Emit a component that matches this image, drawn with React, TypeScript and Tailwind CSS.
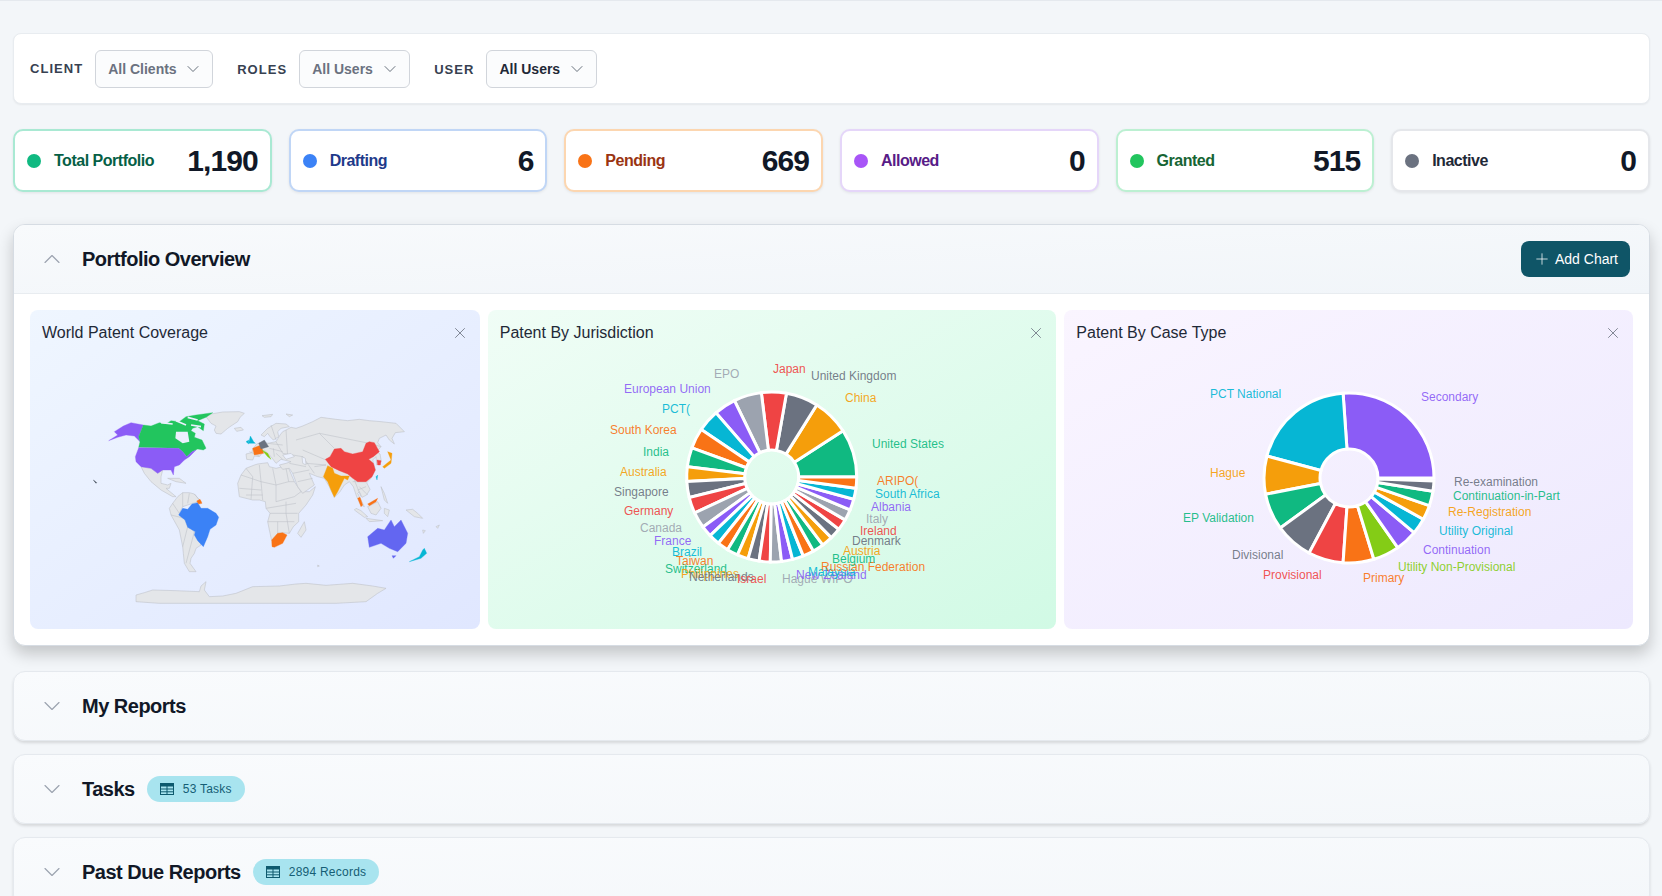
import { ChevronDown, ChevronUp, Plus, X } from "lucide-react";

const FONT = "font-['Liberation_Sans',Arial,sans-serif]";

const PALETTE = ["#10b981", "#f59e0b", "#6b7280", "#ef4444", "#9ca3af", "#8b5cf6", "#06b6d4", "#f97316"];

const STATS = [
  { label: "Total Portfolio", value: "1,190", border: "border-[#a9e9d3]", text: "text-[#065f46]", dot: "bg-[#10b981]" },
  { label: "Drafting", value: "6", border: "border-[#c0d6f6]", text: "text-[#1e3a8a]", dot: "bg-[#3b82f6]" },
  { label: "Pending", value: "669", border: "border-[#fcd6b0]", text: "text-[#9a3412]", dot: "bg-[#f97316]" },
  { label: "Allowed", value: "0", border: "border-[#e5d6f9]", text: "text-[#581c87]", dot: "bg-[#a855f7]" },
  { label: "Granted", value: "515", border: "border-[#bcf0d2]", text: "text-[#166534]", dot: "bg-[#22c55e]" },
  { label: "Inactive", value: "0", border: "border-[#e5e7eb]", text: "text-[#1f2937]", dot: "bg-[#6b7280]" },
];

// [label, x, baseline] in px inside the chart svg; order = counter-clockwise from 3 o'clock
const JURISDICTION: [string, number, number][] = [
  ["United States", 293, 99], ["China", 266, 53], ["United Kingdom", 232, 31], ["Japan", 194, 24],
  ["EPO", 135, 29], ["European Union", 45, 44], ["PCT(", 83, 64], ["South Korea", 31, 85],
  ["India", 64, 107], ["Australia", 41, 127], ["Singapore", 35, 147], ["Germany", 45, 166],
  ["Canada", 61, 183], ["France", 75, 196], ["Brazil", 93, 207], ["Taiwan", 97, 216],
  ["Switzerland", 86, 224], ["Philippines", 102, 229], ["Netherlands", 110, 232], ["Israel", 158, 234],
  ["Hague WIPO", 203, 234], ["New Zealand", 217, 230], ["Malaysia", 229, 227], ["Russian Federation", 242, 222],
  ["Belgium", 253, 214], ["Austria", 264, 206], ["Denmark", 273, 196], ["Ireland", 281, 186],
  ["Italy", 287, 174], ["Albania", 292, 162], ["South Africa", 296, 149], ["ARIPO(", 298, 136],
];

const JUR_ANGLES = [33, 58, 80, 97, 116, 131, 146, 160, 173, 183, 194, 205, 216];
for (let i = 1; i <= 19; i++) JUR_ANGLES.push(216 + (144 / 19) * i);

const CASE_TYPES: [string, string, number, number, number][] = [
  ["Secondary", "#8b5cf6", 94, 271, 32],
  ["PCT National", "#06b6d4", 165, 60, 29],
  ["Hague", "#f59e0b", 191, 60, 108],
  ["EP Validation", "#10b981", 216, 33, 153],
  ["Divisional", "#6b7280", 242, 82, 190],
  ["Provisional", "#ef4444", 266, 113, 210],
  ["Primary", "#f97316", 287, 213, 213],
  ["Utility Non-Provisional", "#84cc16", 305, 248, 202],
  ["Continuation", "#8b5cf6", 320, 273, 185],
  ["Utility Original", "#06b6d4", 331, 289, 166],
  ["Re-Registration", "#f59e0b", 341, 298, 147],
  ["Continuation-in-Part", "#10b981", 351, 303, 131],
  ["Re-examination", "#6b7280", 358, 304, 117],
];

function slicePath(cx: number, cy: number, r0: number, r1: number, a0: number, a1: number) {
  const p = (r: number, a: number) => {
    const t = (a * Math.PI) / 180;
    return `${(cx + r * Math.cos(t)).toFixed(2)} ${(cy - r * Math.sin(t)).toFixed(2)}`;
  };
  const large = a1 - a0 > 180 ? 1 : 0;
  return `M${p(r1, a0)}A${r1} ${r1} 0 ${large} 0 ${p(r1, a1)}L${p(r0, a1)}A${r0} ${r0} 0 ${large} 1 ${p(r0, a0)}Z`;
}

function JurisdictionChart() {
  return (
    <svg viewBox="-7 0 400 250" className="mx-auto mt-1 h-[250px] w-[400px] overflow-visible">
      {JUR_ANGLES.map((a, i) => (
        <path key={i} d={slicePath(192.7, 128, 27, 85, i === 0 ? 0 : JUR_ANGLES[i - 1], a)} fill={PALETTE[i % 8]} stroke="#fff" strokeWidth="3" />
      ))}
      {JURISDICTION.map(([t, x, y], i) => (
        <text key={t} x={x} y={y} fontSize="12" fill={PALETTE[i % 8]} fillOpacity="0.92">{t}</text>
      ))}
    </svg>
  );
}

function CaseTypeChart() {
  return (
    <svg viewBox="-16 0 430 230" className="mx-auto mt-6 h-[230px] w-[430px] overflow-visible">
      {CASE_TYPES.map(([t, c, a], i) => (
        <path key={t} d={slicePath(199, 109, 29, 85, i === 0 ? 0 : CASE_TYPES[i - 1][2], a)} fill={c} stroke="#fff" strokeWidth="3" />
      ))}
      {CASE_TYPES.map(([t, c, , x, y]) => (
        <text key={t} x={x} y={y} fontSize="12" fill={c} fillOpacity="0.92">{t}</text>
      ))}
    </svg>
  );
}

const LAND = "#e4e6e9";
const EDGE = "#bfc3c9";
const HOLE = "#ebf0fd";

const GRAY_SHAPES = [
  // greenland, iceland, svalbard
  "575,342 610,336 660,335 675,340 662,352 655,365 635,378 625,385 605,402 590,400 585,390 590,378 575,370 560,350",
  "645,385 665,382 672,390 652,394",
  "728,347 760,343 755,350 735,352",
  "800,342 820,345 810,350",
  // central america and cuba
  "365,500 395,505 415,520 430,510 425,530 425,550 445,555 455,550 450,565 440,565 470,590 460,590 425,570 395,545 375,520",
  "445,535 480,535 500,550 470,545",
  // south america
  "460,610 475,590 490,578 510,578 525,582 545,605 520,610 490,620 480,640 495,655 505,680 525,695 540,720 545,735 530,745 525,760 515,775 512,790 530,815 510,815 495,790 492,760 490,740 480,690 455,645 450,625",
  // africa and madagascar
  "655,550 665,525 680,505 705,495 715,492 745,488 750,500 770,505 790,500 808,505 825,545 845,575 870,575 888,560 880,585 860,615 838,640 838,665 822,680 810,700 790,698 775,700 757,722 750,690 745,665 752,640 740,625 738,605 720,600 700,600 680,595 660,590",
  "855,665 860,690 845,712 835,700",
  // eurasia
  "682,478 680,462 697,458 700,447 712,432 730,425 745,430 770,425 782,405 790,395 800,390 815,382 830,385 850,378 880,365 905,352 950,358 985,362 1020,358 1050,362 1085,365 1130,370 1155,395 1128,398 1118,415 1125,432 1110,420 1100,405 1080,415 1075,428 1085,440 1072,455 1082,462 1086,485 1072,495 1070,470 1060,480 1068,510 1055,535 1042,548 1052,568 1042,585 1028,592 1020,575 1015,580 1025,600 1035,620 1025,615 1012,590 1002,560 990,545 975,555 962,575 945,592 930,560 915,535 895,530 870,520 885,555 850,580 835,560 820,520 810,505 790,508 780,495 800,490 815,485 785,478 770,490 755,470 735,450 720,470 705,468 700,480",
  // scandinavia
  "725,405 745,385 770,370 800,372 810,380 785,385 775,395 778,410 762,420 752,410 745,400 735,410",
  // indonesia, philippines, new guinea
  "1010,625 1025,632 1045,650 1035,652 1005,630",
  "1045,620 1075,605 1085,625 1070,645 1055,640",
  "1040,655 1090,662 1050,665",
  "1095,625 1110,630 1105,650 1095,640",
  "1085,560 1095,580 1105,610 1095,600",
  "1160,630 1180,628 1195,640 1210,655 1185,650",
  "1210,690 1218,692 1212,700",
  "1250,680 1260,675 1255,685",
  "895,795 900,798 895,800",
  // antarctica
  "350,885 375,878 400,870 470,872 540,875 545,858 560,845 555,870 570,890 610,888 650,880 680,868 700,860 780,858 830,852 860,850 920,856 1000,850 1060,858 1100,865 1075,880 1040,905 950,910 420,910 350,905",
];

const COLORED_SHAPES: [string, string][] = [
  ["#8b5cf6", "268,422 295,405 285,395 312,378 335,368 372,375 358,410 362,425 345,408 320,405 295,412"],
  ["#22c55e", "372,375 395,378 420,368 440,372 455,362 480,365 500,350 530,345 580,338 560,352 535,362 555,372 552,392 535,380 520,385 515,392 528,400 525,412 548,420 560,445 552,450 535,447 518,455 502,470 490,455 478,445 358,442 362,425 358,410"],
  ["#8b5cf6", "358,443 478,445 490,455 502,470 518,455 530,450 510,470 495,480 480,495 465,500 462,525 455,510 430,510 415,520 395,505 365,500 350,485 348,470"],
  ["#3b82f6", "478,645 490,625 505,628 518,612 535,608 545,625 565,625 590,640 598,652 590,675 572,688 565,710 552,740 535,722 525,705 528,695 505,682 497,660"],
  ["#f97316", "532,603 542,598 548,610 538,612"],
  ["#f97316", "757,720 775,700 790,698 803,705 790,730 765,742 758,740"],
  ["#ef4444", "918,478 932,470 945,447 965,445 975,455 1000,462 1030,455 1040,430 1050,425 1065,428 1080,455 1062,470 1048,478 1062,490 1068,510 1058,530 1040,545 1015,545 1000,535 985,522 960,512 935,500"],
  ["#f59e0b", "912,530 925,497 940,505 945,520 965,528 990,528 985,540 975,535 965,555 955,575 945,592 935,570 925,545"],
  ["#f59e0b", "1090,500 1115,480 1105,455 1118,460 1115,490 1095,505"],
  ["#ef4444", "1073,480 1085,482 1083,495 1075,495"],
  ["#06b6d4", "1070,530 1075,525 1073,540"],
  ["#f97316", "1015,595 1022,592 1030,615 1025,620"],
  ["#f97316", "1045,612 1075,595 1070,605 1050,617"],
  ["#6366f1", "1045,710 1075,685 1095,690 1115,660 1125,680 1145,660 1165,700 1160,730 1135,755 1110,745 1085,730 1050,742"],
  ["#6366f1", "1118,767 1130,767 1122,775"],
  ["#06b6d4", "1170,785 1200,770 1210,750 1215,745 1222,760 1205,775"],
  ["#06b6d4", "688,430 693,408 703,425 708,430"],
  ["#06b6d4", "680,425 688,420 688,432"],
  ["#f97316", "700,445 725,435 733,460 705,465"],
  ["#6b7280", "718,430 735,420 748,440 725,447"],
  ["#84cc16", "728,450 745,460 755,478 745,470"],
  ["#1f2937", "222,540 232,548 230,550"],
];

const BORDERS = [
  // africa
  "M665 525L725 545L730 600M680 505L700 530L695 598M720 495L725 545L770 555L760 505M770 555L770 605M808 545L770 555M800 505L808 545L825 545M770 605L825 590L845 575M740 625L830 610M752 640L835 640M745 665L775 665L775 700M775 665L825 665M800 605L800 640M660 565L725 570M680 585L730 585M800 640L810 700",
  // europe and asia
  "M800 390L805 470M770 425L790 460L850 470M850 450L920 480M860 490L920 495M810 490L860 500M830 420L900 400L945 445M900 400L1040 428M850 470L885 520M885 500L920 495M820 520L870 510M835 545L880 535",
  "M755 375L770 420M745 430L790 435M750 445L790 455M770 460L790 478M690 455L720 468M762 445L765 470",
  "M1005 540L1025 590M1020 560L1045 585M1000 545L1040 545M1015 570L1040 560M1040 428L1085 440",
  // south america
  "M480 640L460 610M495 655L455 645M505 680L490 740M525 695L500 790M490 578L490 620M545 605L525 582M505 610L510 580",
];

function WorldMap() {
  return (
    <svg viewBox="33 135 1347 840" className="block h-[280px] w-full">
      {GRAY_SHAPES.map((d) => (
        <polygon key={d} points={d} fill={LAND} stroke={EDGE} strokeWidth="1.8" strokeLinejoin="round" />
      ))}
      <path d={BORDERS.join("")} fill="none" stroke={EDGE} strokeWidth="1.8" />
      {/* black sea and caspian */}
      <polygon points="790,465 815,460 825,470 800,478" fill={HOLE} stroke={EDGE} strokeWidth="1.8" />
      <polygon points="848,470 858,475 860,495 850,490" fill={HOLE} stroke={EDGE} strokeWidth="1.8" />
      {COLORED_SHAPES.map(([c, d]) => (
        <polygon key={d} points={d} fill={c} stroke={c} strokeWidth="1" strokeLinejoin="round" />
      ))}
      {/* hudson bay and the arctic channels */}
      <polygon points="470,395 505,395 510,425 490,430 468,415" fill={HOLE} />
      <path d="M425 368L460 372M470 362L500 375M505 352L535 360M515 375L545 380" stroke={HOLE} strokeWidth="5" fill="none" />
    </svg>
  );
}

function TableIcon() {
  return (
    <svg viewBox="0 0 14 12" className="h-3 w-3.5 shrink-0" fill="none" stroke="#0e5a6e" strokeWidth="1">
      <rect x="0.5" y="0.5" width="13" height="11" />
      <rect x="0.5" y="0.5" width="13" height="2.5" fill="#0e5a6e" />
      <path d="M0.5 6H13.5M0.5 8.8H13.5M7 3V11.5" />
    </svg>
  );
}

function Badge({ text }: { text: string }) {
  return (
    <span className="flex h-[26px] items-center gap-[9px] rounded-full bg-[#a8e4ef] px-[13px] text-xs tracking-[0.02em] text-[#155e75]">
      <TableIcon />
      {text}
    </span>
  );
}

function Collapsed({ title, badge }: { title: string; badge?: string }) {
  return (
    <div className="flex h-[70px] shrink-0 items-center rounded-xl border border-[#e5e9ee] bg-linear-to-br from-[#f9fbfd] to-[#f4f7fa] pl-[24px] shadow-[0_2px_3px_rgba(0,0,0,0.12)]">
      <ChevronDown size={28} strokeWidth={1} className="text-[#9ca3af]" />
      <h2 className="ml-[16px] text-xl font-bold tracking-[-0.025em] text-[#111827]">{title}</h2>
      {badge && <span className="ml-3"><Badge text={badge} /></span>}
    </div>
  );
}

function ChartCard({ title, tone, children }: { title: string; tone: string; children: React.ReactNode }) {
  return (
    <div className={`h-[319px] overflow-hidden rounded-lg bg-linear-to-br ${tone}`}>
      <div className="flex h-[35px] items-end justify-between pl-3 pr-[11px]">
        <span className="text-base leading-6 text-[#1f2937]">{title}</span>
        <X size={18} strokeWidth={1.1} className="mb-[3px] text-[#6b7280]" />
      </div>
      {children}
    </div>
  );
}

function Select({ text, dark, width }: { text: string; dark?: boolean; width: string }) {
  return (
    <div className={`flex h-[38px] items-center justify-between rounded-md border border-[#d1d5db] bg-[#fbfcfd] pl-3 pr-[9px] text-[14px] font-semibold ${width} ${dark ? "text-[#1f2937]" : "text-[#6b7280]"}`}>
      <span className="pt-px">{text}</span>
      <ChevronDown size={20} strokeWidth={1} className="text-[#4b5563]" />
    </div>
  );
}

function Label({ text }: { text: string }) {
  return <span className="text-[13px] font-bold uppercase tracking-[0.08em] text-[#374151]">{text}</span>;
}

export default function App() {
  return (
    <div className={`flex h-[896px] flex-col overflow-hidden border-t border-[#e5e9ee] bg-[#f3f6f9] pl-[13px] pr-[12px] pt-[32px] ${FONT}`}>
      <div className="flex h-[71px] shrink-0 items-center rounded-lg border border-[#e8ecf0] bg-white pl-4 shadow-[0_1px_2px_rgba(0,0,0,0.06)]">
        <Label text="Client" />
        <div className="ml-3"><Select text="All Clients" width="w-[118px]" /></div>
        <div className="ml-6"><Label text="Roles" /></div>
        <div className="ml-3"><Select text="All Users" width="w-[111px]" /></div>
        <div className="ml-6"><Label text="User" /></div>
        <div className="ml-3"><Select text="All Users" dark width="w-[111px]" /></div>
      </div>

      <div className="mt-[25px] grid shrink-0 grid-cols-6 gap-[16.8px]">
        {STATS.map((s) => (
          <div key={s.label} className={`flex h-[63px] items-center justify-between rounded-[10px] border-2 bg-white pl-[12px] pr-[12px] shadow-[0_1px_3px_rgba(0,0,0,0.08)] ${s.border}`}>
            <div className="flex items-center gap-[13px]">
              <span className={`h-3.5 w-3.5 rounded-full ${s.dot}`} />
              <span className={`text-[16px] font-semibold tracking-[-0.03em] ${s.text}`}>{s.label}</span>
            </div>
            <span className="text-[30px] font-bold tracking-[-0.03em] text-[#111827]">{s.value}</span>
          </div>
        ))}
      </div>

      <div className="mt-[32px] shrink-0 overflow-hidden rounded-xl border border-[#d6dce3] bg-white shadow-[0_8px_16px_rgba(0,0,0,0.2)]">
        <div className="flex h-[69px] items-center justify-between border-b border-[#e8ecf0] bg-linear-to-br from-[#f8fafc] to-[#f1f5f9] pl-[24px] pr-[19px]">
          <div className="flex items-center">
            <ChevronUp size={28} strokeWidth={1} className="text-[#9ca3af]" />
            <h2 className="ml-[16px] text-xl font-bold tracking-[-0.025em] text-[#111827]">Portfolio Overview</h2>
          </div>
          <button className="flex h-9 w-[109px] items-center justify-center gap-[4px] rounded-lg bg-[#0f5567] text-sm font-normal text-white">
            <Plus size={18} strokeWidth={1} />
            Add Chart
          </button>
        </div>
        <div className="grid grid-cols-[450fr_569fr_569fr] gap-2 p-4">
          <ChartCard title="World Patent Coverage" tone="from-[#eff6ff] to-[#e0e7ff]"><WorldMap /></ChartCard>
          <ChartCard title="Patent By Jurisdiction" tone="from-[#f0fdf6] to-[#d1fae5]"><JurisdictionChart /></ChartCard>
          <ChartCard title="Patent By Case Type" tone="from-[#faf5ff] to-[#ede9fe]"><CaseTypeChart /></ChartCard>
        </div>
      </div>

      <div className="mt-[25px] flex flex-col gap-[13px]">
        <Collapsed title="My Reports" />
        <Collapsed title="Tasks" badge="53 Tasks" />
        <Collapsed title="Past Due Reports" badge="2894 Records" />
      </div>
    </div>
  );
}
